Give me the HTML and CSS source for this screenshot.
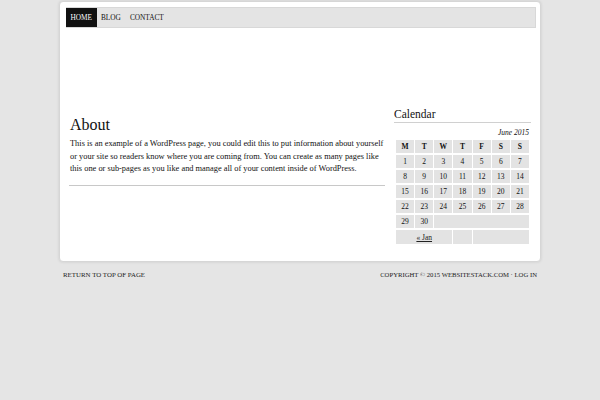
FILE: index.html
```html
<!DOCTYPE html>
<html lang="en">
<head>
    <meta charset="UTF-8">
    <title>About</title>
    <link rel="stylesheet" href="styles.css">
</head>
<body>
    <div class="wrap">
        <div class="nav">
            <a href="#" class="current">HOME</a>
            <a href="#">BLOG</a>
            <a href="#">CONTACT</a>
        </div>
        <div class="header"></div>
        <div class="inner">
            <div class="content">
                <h1>About</h1>
                <p>This is an example of a WordPress page, you could edit this to put information about yourself or your site so readers know where you are coming from. You can create as many pages like this one or sub-pages as you like and manage all of your content inside of WordPress.</p>
            </div>
            <div class="sidebar">
                <h4>Calendar</h4>
                <table class="calendar">
                    <caption>June 2015</caption>
                    <thead>
                        <tr><th>M</th><th>T</th><th>W</th><th>T</th><th>F</th><th>S</th><th>S</th></tr>
                    </thead>
                    <tbody>
                        <tr><td>1</td><td>2</td><td>3</td><td>4</td><td>5</td><td>6</td><td>7</td></tr>
                        <tr><td>8</td><td>9</td><td>10</td><td>11</td><td>12</td><td>13</td><td>14</td></tr>
                        <tr><td>15</td><td>16</td><td>17</td><td>18</td><td>19</td><td>20</td><td>21</td></tr>
                        <tr><td>22</td><td>23</td><td>24</td><td>25</td><td>26</td><td>27</td><td>28</td></tr>
                        <tr><td>29</td><td>30</td><td colspan="5" class="pad"></td></tr>
                    </tbody>
                    <tfoot>
                        <tr><td colspan="3"><a href="#">&laquo; Jan</a></td><td></td><td colspan="3"></td></tr>
                    </tfoot>
                </table>
            </div>
        </div>
    </div>
    <div class="footer">
        <a href="#">RETURN TO TOP OF PAGE</a>
        <span class="copy">COPYRIGHT &copy; 2015 <a href="#">WEBSITESTACK.COM</a> &middot; <a href="#">LOG IN</a></span>
    </div>
</body>
</html>
```

FILE: styles.css
```css
body {
    margin: 0;
    background: #e5e5e5;
    font-family: "Liberation Serif", serif;
    color: #222;
}
a {
    color: #222;
    text-decoration: none;
}
.wrap {
    width: 470px;
    margin: 1px auto 0;
    padding: 5px 4px 15px 6px;
    background: #fff;
    border: 1px solid #d6d6d6;
    border-radius: 4px;
    box-shadow: 0 0 3px rgba(0,0,0,0.12);
}
.nav {
    display: flex;
    background: #e4e4e4;
    border: 1px solid #d8d8d8;
    border-left: none;
    height: 19px;
    padding: 0;
}
.nav a {
    font-size: 7.3px;
    line-height: 19px;
    padding: 0 4.5px;
    color: #111;
}
.nav a.current {
    background: #111;
    color: #fff;
}
.header {
    height: 80px;
}
.inner {
    display: flex;
    padding: 0 1px 0 3px;
}
.content {
    width: 316px;
    border-bottom: 1px solid #c8c8c8;
    padding-bottom: 9px;
    align-self: flex-start;
    margin-top: 8px;
}
h1 {
    font-weight: normal;
    font-size: 16px;
    margin: 0 0 4px 1px;
    color: #111;
}
.content p {
    font-size: 8.4px;
    line-height: 12.5px;
    margin: 0 0 0 1px;
    color: #111;
}
.sidebar {
    width: 136px;
    margin-left: 10px;
}
h4 {
    font-weight: normal;
    font-size: 11.5px;
    margin: 0 0 5px -1px;
    padding-bottom: 2px;
    border-bottom: 1px solid #d0d0d0;
    color: #111;
}
.calendar {
    width: 135px;
    border-collapse: separate;
    border-spacing: 1px 2px;
    font-size: 7.5px;
    color: #111;
}
.calendar caption {
    text-align: right;
    font-style: italic;
    font-size: 7.5px;
    padding: 0 1px 1px 0;
}
.calendar th,
.calendar td {
    background: #e3e3e3;
    text-align: center;
    height: 13px;
    padding: 0;
}
.calendar tfoot td {
    height: 14px;
}
.calendar tfoot a {
    text-decoration: underline;
}
.footer {
    width: 474px;
    margin: 9px auto 0;
    display: flex;
    justify-content: space-between;
    font-size: 6.9px;
}
.footer .copy {
    font-size: 6.7px;
}
```
